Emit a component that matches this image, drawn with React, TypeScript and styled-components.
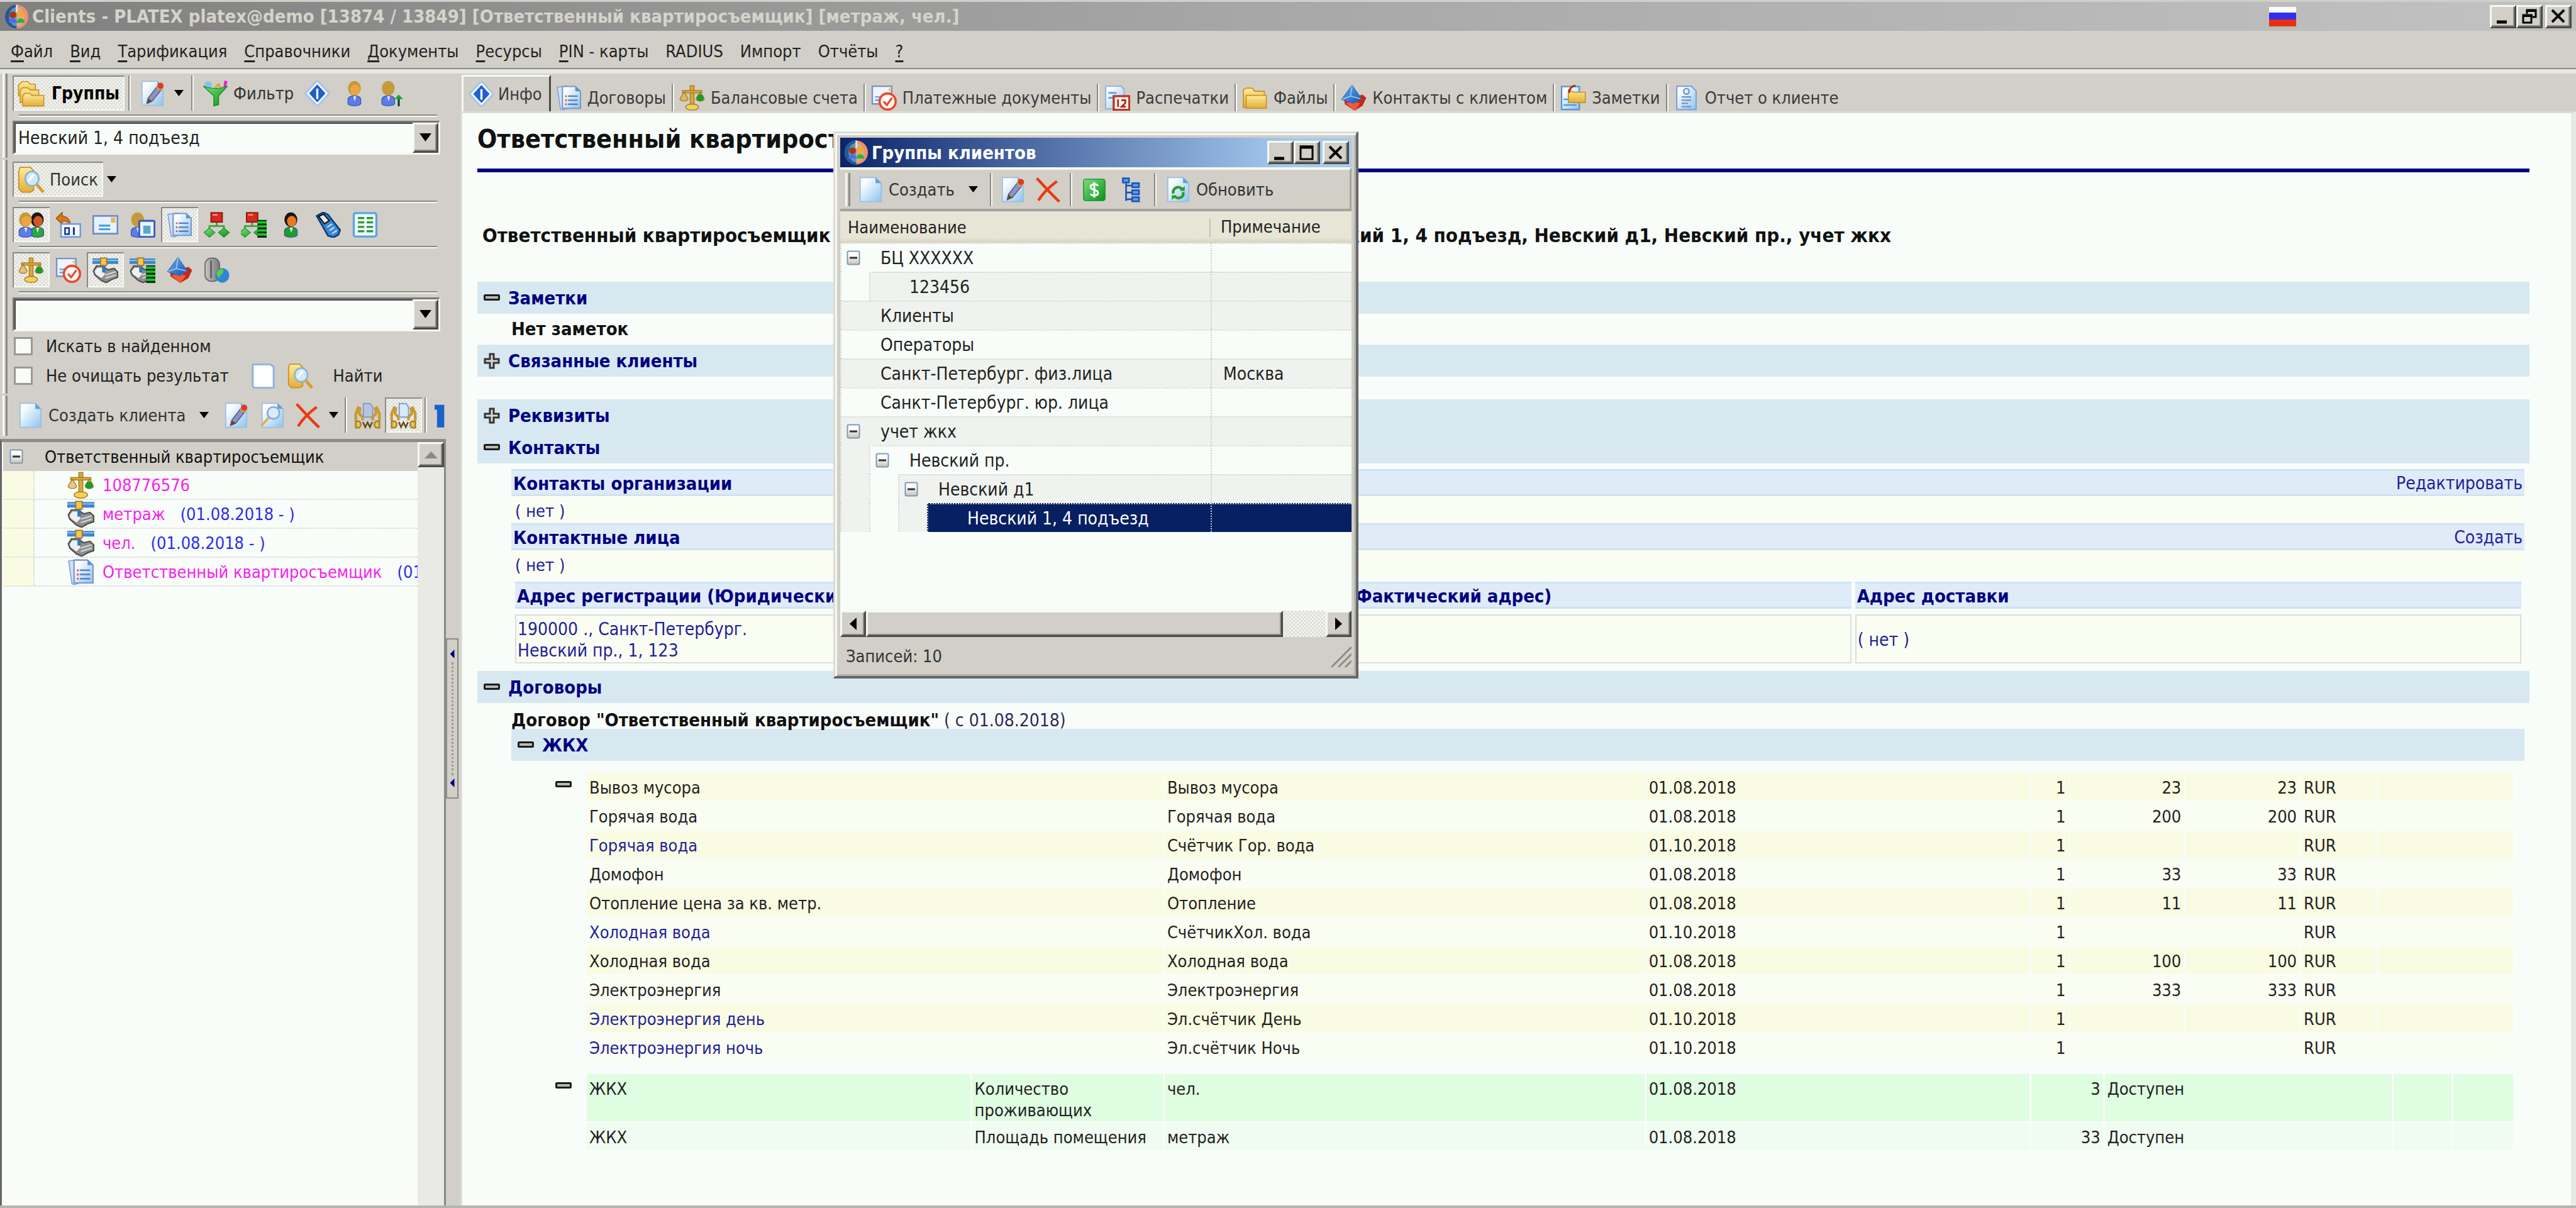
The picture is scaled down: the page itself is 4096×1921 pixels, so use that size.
import React from 'react';
import styled, { createGlobalStyle, css } from 'styled-components';

const FONT = '"DejaVu Sans Condensed", "DejaVu Sans", sans-serif';
const C = {
  face: '#d1cfc7', light: '#f6f8f2', mid: '#8a8a86', dark: '#4a4a48',
  page: '#f8fdf9', bar: '#d8e8f0', navy: '#000080', sub: '#e0ebf8', subLine: '#cfe2f6', cream: '#fafdf2',
};

const Global = createGlobalStyle`
  * { box-sizing: border-box; }
  body { margin: 0; background: ${C.face}; font-family: ${FONT}; font-size: 27px; color: #222; }
  button, select { font: inherit; color: inherit; margin: 0; padding: 0; border: 0; background: none; border-radius: 0; }
  h1, h2, h3, p, ul { margin: 0; padding: 0; font-weight: normal; }
  ul { list-style: none; }
  a { color: inherit; text-decoration: none; }
  svg { display: block; flex: none; }
`;

/* ---------- icons ---------- */

const DefsSvg = styled.svg`position: absolute;`;
const Defs = () => (
  <DefsSvg width="0" height="0" aria-hidden="true">
    <defs>
      <linearGradient id="paper" x1="0" y1="0" x2="1" y2="1"><stop offset="0.2" stopColor="#fbfdff" /><stop offset="1" stopColor="#8cc4ee" /></linearGradient>
      <linearGradient id="gold" x1="0" y1="0" x2="0" y2="1"><stop offset="0" stopColor="#ffeb9a" /><stop offset="1" stopColor="#e2ae38" /></linearGradient>
      <linearGradient id="green" x1="0" y1="0" x2="1" y2="1"><stop offset="0" stopColor="#7be07b" /><stop offset="1" stopColor="#0a8f1c" /></linearGradient>
      <linearGradient id="blue" x1="0" y1="0" x2="1" y2="1"><stop offset="0" stopColor="#6fb4ee" /><stop offset="1" stopColor="#1450b4" /></linearGradient>
      <linearGradient id="steel" x1="0" y1="0" x2="1" y2="0"><stop offset="0" stopColor="#c8c8c8" /><stop offset="1" stopColor="#777" /></linearGradient>
      <linearGradient id="box" x1="0" y1="0" x2="0" y2="1"><stop offset="0.3" stopColor="#fff" /><stop offset="1" stopColor="#c9c3b4" /></linearGradient>
    </defs>
  </DefsSvg>
);

const Sheet = () => (
  <>
    <path d="M1.500 .5h9.500l3.500 3.500v11.500h-13z" fill="url(#paper)" stroke="#9dbde6" strokeWidth=".7" />
    <path d="M11 .5l3.500 3.500h-3.500z" fill="#5f9fdc" />
  </>
);
const Pencil = () => (
  <>
    <path d="M4.500 14.300l.8-3.300 5.700-7.500 2.600 2-5.900 7.400z" fill="#8f93c4" stroke="#5a5a80" strokeWidth=".6" />
    <path d="M4.500 14.300l.8-3.300 2.400 1.900z" fill="#6a4a1a" />
    <path d="M10.300 4.300l2.600 2 .9-1.200-2.500-2.100z" fill="#e6a72e" />
    <circle cx="13" cy="3.300" r="1.900" fill="#e03a1c" />
  </>
);
const Glass = () => (
  <>
    <path d="M11 10.500l4.300 5" stroke="#e09a2a" strokeWidth="1.800" />
    <ellipse cx="8.500" cy="7.500" rx="4" ry="4.300" fill="#cfeafc" stroke="#8fb2cc" strokeWidth="1" />
    <path d="M6.500 9l3-4" stroke="#fff" strokeWidth="1.200" />
  </>
);
const Head = ({ x = 0, hair = '#c49a3c', face = '#f0a440', body = '#5a7cf0' }: { x?: number; hair?: string; face?: string; body?: string }) => (
  <g transform={`translate(${x} 0)`}>
    <path d="M4 14.500v-2.500c0-3.500 8-3.500 8 0v2.500c-1.500 1.600-6.500 1.600-8 0z" fill={body} stroke="#2d4a9c" strokeWidth=".4" />
    <path d="M7.300 9.800l.9 3.200 1-3.200z" fill="#e8ecff" />
    <ellipse cx="8" cy="4.800" rx="4" ry="4.500" fill={hair} />
    <ellipse cx="8.500" cy="5.800" rx="2.900" ry="3.400" fill={face} />
  </g>
);
const Scales = () => (
  <g fill="#d9a83c" stroke="#a87818" strokeWidth=".5">
    <rect x="6.800" y=".5" width="2.400" height="12" />
    <path d="M2 3.500h12v1.500h-12z" />
    <path d="M.5 8.500l2.500-4 2.500 4c0 2-5 2-5 0zM10.500 8.500l2.500-4 2.500 4c0 2-5 2-5 0z" fillOpacity=".6" />
    <ellipse cx="8" cy="13.800" rx="4" ry="1.900" fill="#f2d060" />
    <circle cx="13" cy="8" r="2.200" fill="#1c9a2c" stroke="none" />
  </g>
);
const Docs = () => (
  <>
    <path d="M.8 1.500l6-.8 6 12-8.500 2.800-1.500-.5z" fill="#cfe2f8" stroke="#7f9fd8" strokeWidth=".6" />
    <path d="M4 1h8l3.200 3v10.500h-11.200z" fill="url(#paper)" stroke="#7a94d0" strokeWidth=".8" />
    <path d="M12 1l3.200 3h-3.200z" fill="#5a8fdc" />
    <path d="M7.500 7h6M7.500 9.500h6M7.500 12h6" stroke="#5a7cc8" strokeWidth=".9" />
    <path d="M5.700 7h1M5.700 9.500h1M5.700 12h1" stroke="#e0502a" strokeWidth="1" />
  </>
);
const Meter = () => (
  <>
    <path d="M0 .8h16v3.400h-16z" fill="#3f86cc" /><path d="M0 2h16" stroke="#9cc8ee" strokeWidth=".6" />
    <path d="M.6 8.500l1.900-3h4l3 2.300 4-.8 2.200 2.200v3.300l-3.700 1.300-3.500 2-3-1.300-4-3.500z" fill="#8e8e8e" stroke="#4c4c4c" strokeWidth=".8" />
    <path d="M1.300 8.800l1.700-2.300h3l1.800 4-2.300 2.500-3.500-2.500z" fill="#f0f0f0" />
    <path d="M8 11l6.500-2M8 13l6.500-2" stroke="#d8d8d8" strokeWidth=".8" />
    <path d="M6 5h2v4.500h-2z" fill="#2f76c8" />
    <rect x="5" y=".5" width="3.800" height="4.600" fill="#f4c850" stroke="#a87820" strokeWidth=".7" />
  </>
);
const Bars = () => (
  <g><rect x="10.300" y="5" width="5.700" height="11" fill="#0a2a0a" /><path d="M10.300 6.500h5.700M10.300 9h5.700M10.300 11.500h5.700M10.300 14h5.700" stroke="#19c832" strokeWidth="1.400" /></g>
);
const Paid = () => (
  <>
    <path d="M.8.8h12v11h-12z" fill="#eef5ff" stroke="#7d8fc4" strokeWidth=".9" />
    <path d="M2.500 7.500h3M2.500 9.500h3" stroke="#6aa8e8" strokeWidth="1" /><path d="M10.500 3l1.500-1.500v3z" fill="#e8c850" />
    <circle cx="10.300" cy="10.300" r="5" fill="#fff6f2" stroke="#e8492a" strokeWidth="1.400" />
    <path d="M7.800 10.300l2 2.200 3.200-4.500" fill="none" stroke="#e8492a" strokeWidth="1.200" />
  </>
);
const Gems = () => (
  <>
    <path d="M2 9l11.500-3 2.300 2-2.300 5-5 3-6-4z" fill="#c42a14" /><path d="M3 11.500l4-1.500 5 1.500-3.500 4.500z" fill="#ee5a3a" />
    <path d="M7 .2l5.800 8.300-5 3-7.300-2.500z" fill="url(#blue)" stroke="#2a68b8" strokeWidth=".4" />
    <path d="M7 .5l-1 6.500-5 1.800M6 7l6 1.500" stroke="#9cd0f4" strokeWidth=".6" fill="none" />
  </>
);
const Hands = ({ bg }: { bg: string }) => (
  <>
    <path d="M5.500 1h4l1.500 2v6h-5.500z" fill={bg} stroke="#7a9cd8" strokeWidth=".7" />
    <path d="M1 11v-4l1.500-3.500 1 .5-.5 3 2 2v2M15 11v-4l-1.500-3.500-1 .5.5 3-2 2v2" fill="none" stroke="#c89a34" strokeWidth="1.600" />
    <path d="M1 11.500h1.500c2 0 2 3.800 0 3.800h-1.500zM15 11.500h-1.500c-2 0-2 3.800 0 3.800h1.500z" fill="#e4c468" stroke="#b08420" strokeWidth="1" />
    <path d="M5.300 12l1.300 3 1.400-2.800 1.400 2.800 1.300-3" fill="none" stroke="#604818" strokeWidth=".9" />
  </>
);
const Tree = () => (
  <g>
    <path d="M8 6v3M3.500 11v-2.200h9v2.200" fill="none" stroke="#3a9c3a" strokeWidth="1" />
    <rect x="4.500" y=".5" width="7" height="5.800" fill="#d82a1c" stroke="#8c1408" strokeWidth=".7" /><path d="M5.500 1.800h3" stroke="#f89a8a" />
    <path d="M3.500 10l3.400 2.800-3.400 2.900-3.400-2.900zM12.500 10l3.400 2.800-3.400 2.900-3.400-2.900z" fill="url(#green)" stroke="#158a1c" strokeWidth=".4" />
  </g>
);

const ICONS: Record<string, React.ReactNode> = {
  app: (
    <>
      <ellipse cx="8" cy="8" rx="7.600" ry="7.800" fill="#f0906a" /><path d="M8 .2a7.600 7.800 0 0 0 0 15.600z" fill="#1f5a94" />
      <ellipse cx="8" cy="8" rx="5" ry="6.300" fill="#b8c8d8" opacity=".5" /><path d="M8 .2v5" stroke="#e8eef4" strokeWidth="1" />
      <circle cx="5.500" cy="6.800" r="2.200" fill="#a83414" /><circle cx="10.300" cy="6.300" r="2.300" fill="#f4a834" />
      <path d="M2.800 12c0-3.800 5.200-3.800 5.200 0z" fill="#4a6cf4" /><path d="M8 12c0-3.800 5.200-3.800 5.200 0z" fill="#2ab43a" />
    </>
  ),
  folders: (
    <g fill="url(#gold)" stroke="#c8922a" strokeWidth=".6">
      <path d="M.5 3l2-2h3.500l1.500 1.500h3v7h-10z" /><path d="M1.500 6.500l1.500-1.800h3l1.500 1.300h5v7.500h-11z" />
      <path d="M3 9.500l1.300-1.500h3l1 1.200h7.200v6.300h-12.500z" />
    </g>
  ),
  folder: (
    <g fill="url(#gold)" stroke="#c8922a" strokeWidth=".7">
      <path d="M.8 14v-11l1.500-1h4l1.500 2h6v10z" /><path d="M2.500 6.500h12.500v8h-12.500z" />
    </g>
  ),
  edit: <><Sheet /><Pencil /></>,
  sheet: <Sheet />,
  view: <><Sheet /><path d="M6 9l-5 5.500" stroke="#e0b050" strokeWidth="1.500" /><circle cx="8.500" cy="6.500" r="3.700" fill="#d8ecfc" stroke="#8fa8d8" strokeWidth="1" /></>,
  cross: <path d="M1 1c3.500 3.500 9 10 14 14.500M13.500 2.800c-5 3.700-9.500 8.500-11.500 12" fill="none" stroke="#ea3a12" strokeWidth="1.700" />,
  funnel: (
    <>
      <circle cx="3.500" cy="3" r="2.400" fill="#7fc4f0" /><path d="M7 4l3-2.500 2 2.500z" fill="#f0a030" /><path d="M13 4l.6-4 1.900.6-.9 3.400z" fill="#e81cd8" />
      <path d="M.5 3.500c4 1.800 11 1.800 15 0l-5.500 6v5.500l-3 .8v-6.300z" fill="url(#green)" stroke="#128a1c" strokeWidth=".5" />
    </>
  ),
  info: (
    <>
      <path d="M8 0l7.500 8-7.500 8-7.500-8z" fill="#f2f7ff" stroke="#a8c4ec" strokeWidth="1.200" /><path d="M8 3l4.500 5-4.500 5-4.500-5z" fill="#2060c8" stroke="#2060c8" strokeWidth=".8" strokeLinejoin="round" />
      <path d="M8 5v6.500" stroke="#fff" strokeWidth="1.300" />
    </>
  ),
  person: <Head />,
  personUp: <><Head x={-2} face="#c49a3c" /><path d="M12.500 16v-6" stroke="#123a12" strokeWidth="1.200" /><path d="M11 11h3l-1.500-1.500z" fill="#12a832" stroke="#12a832" /></>,
  search: (
    <><path d="M1.500.8h6l2 2v11.500l-2 1.200h-5l-1.800-2v-10.500z" fill="url(#gold)" stroke="#c8922a" strokeWidth=".7" /><Glass /></>
  ),
  people: <><Head x={3.800} hair="#1c1410" face="#d05a24" body="#2aa83a" /><Head x={-3.500} /></>,
  redate: (
    <><path d="M.5 4l3.800-3.800v2.300c3.500.5 5 3 5.200 5.500-1.500-2-3-2.500-5.200-2.200v2z" fill="#d8781c" stroke="#984c0c" strokeWidth=".5" />
      <rect x="3.500" y="7.500" width="12" height="8" fill="#f4f9ff" stroke="#6f9cdc" /><rect x="6" y="10" width="2.500" height="3.800" fill="none" stroke="#1a3a9c" strokeWidth="1" /><path d="M11.500 9.500v4.800" stroke="#1a3a9c" strokeWidth="1.200" /></>
  ),
  card: (
    <><rect x=".5" y="2.500" width="15" height="11" fill="#e6f2fe" stroke="#6a88c8" /><rect x="11.500" y="3.500" width="2.800" height="3.200" fill="#e8b84a" /><path d="M4 8.500h7M4 10.800h7" stroke="#3a9ce0" strokeWidth="1.100" /></>
  ),
  idcard: <><Head x={-3} face="#c49a3c" /><rect x="6" y="5.500" width="9.500" height="10" rx="1" fill="#eef5ff" stroke="#3a5cc0" strokeWidth="1.200" /><path d="M8.500 13.500v-5h4.500v5z" fill="#5aa8c8" /></>,
  docs: <Docs />,
  tree: <Tree />,
  treeBars: <><g transform="translate(-1 0)"><Tree /></g><Bars /></>,
  agent: <Head hair="#1c1410" face="#e87a24" body="#1f9c2f" />,
  phone: (
    <><path d="M1 2.500l4-2.300 3 1.500 7.500 9.500-1 3-3 1.600-3.500-1z" fill="#3a86d0" stroke="#123a78" strokeWidth="1" /><path d="M2.300 2.800l3-1.400 3.500 4-3 2z" fill="#e4e8ec" stroke="#111" strokeWidth=".8" /><path d="M7.500 9.500l3-2M9 11.500l3-2M10.500 13.500l3-2" stroke="#bfe0fa" strokeWidth=".9" /></>
  ),
  list: (
    <><rect x="1" y=".7" width="14" height="14.600" rx="1.200" fill="#f4fbff" stroke="#5aa4e0" strokeWidth="1.300" /><path d="M3.500 3.800h4M9 3.800h4M3.500 6.500h4M9 6.500h4M3.500 9.300h4M9 9.300h4M3.500 12h4M9 12h4" stroke="#2a9c3a" strokeWidth="1.300" /></>
  ),
  scales: <Scales />,
  paid: <Paid />,
  meter: <Meter />,
  meterBars: <><Meter /><Bars /></>,
  gems: <Gems />,
  server: (
    <><rect x=".8" y=".5" width="9" height="14.500" rx="4" fill="url(#steel)" stroke="#6a6a6a" strokeWidth=".7" /><path d="M4.500 2v11" stroke="#5c5c5c" strokeWidth="1" /><ellipse cx="11.500" cy="11.300" rx="4.300" ry="4.500" fill="#2f86d8" /><path d="M8.500 8.500c2-2 4.500-1 3.500 1s-2 1-2 3.500c-2-1-2.500-3-1.500-4.500z" fill="#5ccc3a" /></>
  ),
  blank: <path d="M1.500 1h11l2 1.500v13h-12l-1-1z" fill="#fff" stroke="#8fb4e4" strokeWidth="1.200" />,
  handOff: <Hands bg="#b8c4dc" />,
  hand: <Hands bg="#d8eafc" />,
  cut: <path d="M0 1.500h6v14h-4.500v-11h-1.500z" fill="#1a62cc" />,
  print: (
    <><path d="M.8.8h9.500l2 2v12h-11.500z" fill="url(#paper)" stroke="#8fb4e0" strokeWidth=".8" /><path d="M2.500 5h5M2.500 8h3" stroke="#5aa8e8" strokeWidth="1.200" /><rect x="5.800" y="7" width="9.700" height="8.500" fill="#fff2ee" stroke="#c03020" strokeWidth="1.300" /><path d="M8.500 9v4.800M10.500 9.500h2.500v1.800l-2.300 2.200h2.600" fill="none" stroke="#a82014" strokeWidth="1" /></>
  ),
  notes: (
    <><path d="M.8 1h11v14.300h-11z" fill="url(#paper)" stroke="#5a90d8" strokeWidth=".9" /><path d="M2 12.500h8M2 9h3" stroke="#4a9ce8" strokeWidth="1" /><path d="M5 3l3 1.500h7.500v6.500h-10.500z" fill="url(#gold)" stroke="#c09020" strokeWidth=".6" /><path d="M5.500 5c0-2.500 1.500-4.500 4-4.500" fill="none" stroke="#b82a14" strokeWidth="1.200" /></>
  ),
  report: (
    <><path d="M2 .8h9l3 3v11.500h-12z" fill="url(#paper)" stroke="#7fa4e0" strokeWidth=".9" /><circle cx="8" cy="4" r="1.700" fill="none" stroke="#6f92cc" strokeWidth=".9" /><path d="M5 7.500h6M5 9.500h6M5 11.500h4M5 13.500h6" stroke="#6f92cc" strokeWidth=".9" /></>
  ),
  money: (
    <><rect x=".8" y=".8" width="14.400" height="14.400" rx="1.500" fill="url(#green)" stroke="#12902a" strokeWidth=".6" /><path d="M10.500 5.200c-1.200-1.500-5-1.300-5 .9 0 2.300 5 1.500 5 3.800 0 2.200-3.800 2.300-5 .8M8 2.800v10.400" fill="none" stroke="#f2fff0" strokeWidth="1.300" /></>
  ),
  levels: (
    <g stroke="#1a54b8" fill="#5a9cec"><path d="M4.500 3.500v11.500M4.500 5.500h3.500M4.500 9.800h3.500M4.500 14h3.500" fill="none" strokeWidth="1" /><rect x="2.500" y="1" width="3.800" height="2.600" /><rect x="8.300" y="4" width="4.200" height="2.600" /><rect x="8.300" y="8.400" width="4.200" height="2.600" /><rect x="8.300" y="12.700" width="4.200" height="2.600" /></g>
  ),
  refresh: (
    <><Sheet /><path d="M5 10.500c-1-3.500 3.500-5.500 5.500-2.500M11 9.500c1 3.500-3.500 5-5.500 2.500" fill="none" stroke="#2a9c2a" strokeWidth="1.700" /><path d="M9 8.800h3v-3zM7 11.500h-3v3z" fill="#2a9c2a" /></>
  ),
};

const Icon = ({ name, size = 41 }: { name: string; size?: number }) => (
  <svg width={size} height={size} viewBox="0 0 16 16" aria-hidden="true">{ICONS[name]}</svg>
);
const Caret = () => <svg width="15" height="11" viewBox="0 0 15 11" aria-hidden="true"><path d="M0 0h15l-7.500 10z" fill="#000" /></svg>;

const MinusBox = () => (
  <svg width="22" height="24" viewBox="0 0 22 24" aria-hidden="true">
    <rect x="1.500" y="1.500" width="19" height="21" rx="2" fill="url(#box)" stroke="#7d9ab8" strokeWidth="2" /><path d="M5 12h12" stroke="#333" strokeWidth="3" />
  </svg>
);
const Fold = ({ open }: { open?: boolean }) => open ? (
  <svg width="26" height="26" viewBox="0 0 26 26" aria-hidden="true"><rect x="1.500" y="8.500" width="23" height="7" rx="1" fill="#b9bab4" stroke="#1c1c1c" strokeWidth="3" /></svg>
) : (
  <svg width="26" height="26" viewBox="0 0 26 26" aria-hidden="true"><path d="M10 2h6v8h8v6h-8v8h-6v-8h-8v-6h8z" fill="#d9dbd6" stroke="#333" strokeWidth="3" /></svg>
);

/* ---------- shared controls ---------- */

const raised = css`
  background: ${C.face};
  border: 3px solid;
  border-color: ${C.light} ${C.dark} ${C.dark} ${C.light};
  box-shadow: inset -2px -2px 0 ${C.mid};
`;
const sunken = css`
  background: repeating-conic-gradient(#dddcd6 0 25%, #f2f4ef 0 50%) 0 0 / 6px 6px;
  box-shadow: inset 2px 2px 0 ${C.mid}, inset -2px -2px 0 ${C.light};
`;
const ToolButton = styled.button<{ $on?: boolean; $bold?: boolean }>`
  display: flex;
  flex: none;
  align-items: center;
  align-self: stretch;
  gap: 8px;
  padding: 0 8px;
  white-space: nowrap;
  color: #333;
  ${p => p.$bold && css`font-weight: bold; font-size: 28px; gap: 11px; color: #000;`}
  ${p => p.$on && sunken}
`;
const IconButton = styled(ToolButton)<{ $slim?: boolean }>`width: ${p => p.$slim ? 56 : 59}px; padding: 0; justify-content: center;`;
const DropButton = styled.button<{ $wide?: boolean }>`
  display: flex;
  flex: none;
  align-items: center;
  align-self: stretch;
  padding: 0 ${p => p.$wide ? 14 : 6}px;
`;
const Sep = styled.span<{ $m?: number }>`
  width: 4px;
  flex: none;
  align-self: stretch;
  margin: 0 ${p => p.$m ?? 5}px;
  border-left: 2px solid ${C.mid};
  border-right: 2px solid ${C.light};
`;
const CapButton = styled.button`
  ${raised}
  width: 42px;
  height: 37px;
  display: grid;
  place-items: center;
`;
const CapGap = styled.span`width: 4px;`;

/* ---------- window frame ---------- */

const Shell = styled.div`
  height: 100vh;
  display: flex;
  flex-direction: column;
  position: relative;
  overflow: hidden;
  border-top: 3px solid #cfcfcb;
  border-bottom: 4px solid #b4b4b0;
`;
const TitleBar = styled.header`
  height: 46px;
  flex: none;
  display: flex;
  align-items: center;
  padding: 0 7px;
  background: linear-gradient(90deg, #808080, #a8a8a8 50%, #c2c2c2);
`;
const Caption = styled.h1<{ $color: string }>`
  font: bold 29px ${FONT};
  color: ${p => p.$color};
  margin-left: 5px;
  flex: 1;
  white-space: nowrap;
`;
const Flag = styled.svg`margin-right: 308px;`;
const Menu = styled.nav`
  height: 68px;
  flex: none;
  display: flex;
  align-items: center;
  gap: 27px;
  padding: 4px 17px 0;
  border-bottom: 7px solid #e6e8e2;
  box-shadow: inset 0 -2px 0 ${C.mid};
`;
const MenuItem = styled.button`
  white-space: nowrap;
  u { text-decoration-thickness: 3px; text-underline-offset: 5px; }
`;
const Work = styled.div`flex: 1; min-height: 0; display: flex;`;

/* ---------- left pane ---------- */

const Aside = styled.aside`
  width: 709px;
  flex: none;
  display: flex;
  flex-direction: column;
  gap: 3px;
  padding-left: 4px;
`;
const Band = styled.section`
  display: flex;
  gap: 8px;
  overflow: hidden;
`;
const Grip = styled.span`
  width: 8px;
  flex: none;
  border: solid;
  border-width: 0 3px;
  border-color: ${C.light} ${C.mid} ${C.mid} ${C.light};
`;
const BandBody = styled.div`flex: 1; min-width: 0; padding: 3px 9px 5px 0;`;
const Tools = styled.div`display: flex; align-items: center; height: 56px;`;
const Rule = styled.hr`
  height: 4px;
  border: 0;
  margin: 6px 5px 6px 10px;
  border-top: 2px solid ${C.mid};
  border-bottom: 2px solid ${C.light};
`;
const ComboBox = styled.div`
  height: 54px;
  display: flex;
  background: ${C.page};
  border: 3px solid;
  border-color: #777 ${C.light} ${C.light} #777;
  box-shadow: inset 2px 2px 0 ${C.dark};
  select { flex: 1; min-width: 0; appearance: none; padding-left: 6px; font-size: 28px; }
`;
const ComboArrow = styled.span`
  ${raised}
  width: 41px;
  display: grid;
  place-items: center;
`;
const CheckRow = styled.div`display: flex; align-items: center; height: 47px;`;
const CheckLabel = styled.label`
  display: flex;
  align-items: center;
  gap: 21px;
  padding-left: 2px;
  white-space: nowrap;
  input { appearance: none; width: 30px; height: 29px; margin: 0; background: ${C.page}; border: 3px solid #999994; }
`;
const FindTools = styled.div`display: flex; align-items: center; height: 47px; margin-left: 34px; gap: 18px;`;
const PlainButton = styled.button`margin-left: 14px;`;

const TreePane = styled.div`
  flex: 1;
  min-height: 0;
  display: flex;
  margin: 2px 0 0 -4px;
  background: ${C.page};
  border: 3px solid;
  border-width: 5px 3px 0;
  border-color: ${C.mid} ${C.mid} ${C.mid} #666;
`;
const TreeList = styled.ul`flex: 1; min-width: 0; overflow: hidden; padding-left: 2px;`;
const TreeHead = styled.li`
  display: flex;
  align-items: center;
  height: 46px;
  padding-left: 10px;
  gap: 34px;
  background: ${C.face};
  white-space: nowrap;
  color: #111;
`;
const TreeRow = styled.li`
  display: flex;
  align-items: center;
  height: 46px;
  gap: 13px;
  white-space: nowrap;
  overflow: hidden;
  border-bottom: 2px dotted #d4d6d0;
  &::before {
    content: '';
    width: 48px;
    height: 44px;
    flex: none;
    margin-right: 39px;
    background: #f9fce2;
    border-right: 2px dotted #d4d6d0;
  }
`;
const Pink = styled.span`flex: none; color: #f820f0;`;
const Period = styled.span`min-width: 0; overflow: hidden; color: #2c2cf0; margin-left: 11px;`;
const VTrack = styled.div`width: 42px; background: #e9eae6;`;
const VUp = styled.button`${raised} width: 42px; height: 40px; display: grid; place-items: center;`;

const Splitter = styled.div`
  width: 23px;
  flex: none;
  display: flex;
  flex-direction: column;
  &::before { content: ''; flex: 898; }
  &::after { content: ''; flex: 647; }
`;
const SplitHandle = styled.button`
  height: 255px;
  width: 20px;
  display: flex;
  flex-direction: column;
  align-items: center;
  justify-content: space-between;
  padding: 16px 0;
  border: 2px solid ${C.mid};
  &::after, &::before { content: ''; width: 7px; height: 14px; background: ${C.navy}; clip-path: polygon(100% 0, 100% 100%, 0 50%); }
  span { height: 180px; border-left: 3px dotted #999; }
`;

/* ---------- main pane ---------- */

const Main = styled.main`flex: 1; min-width: 0; display: flex; flex-direction: column;`;
const TabBar = styled.div`display: flex; height: 60px; flex: none; padding: 2px 2px 0; align-items: center;`;
const Tab = styled.button<{ $active?: boolean }>`
  display: flex;
  align-items: center;
  gap: 9px;
  height: 44px;
  padding: 0 9px 0 8px;
  margin-top: 14px;
  color: #3a3a3a;
  white-space: nowrap;
  border-right: 2px solid ${C.mid};
  box-shadow: 2px 0 0 ${C.light};
  margin-right: 2px;
  &:last-child { border: 0; box-shadow: none; }
  ${p => p.$active && css`
    height: 61px;
    margin-top: 3px;
    margin-right: 0;
    padding: 0 11px 0 8px;
    border: 3px solid;
    border-color: ${C.light} ${C.dark} transparent ${C.light};
    box-shadow: none;
    gap: 6px;
  `}
`;
const Page = styled.article`
  flex: 1;
  min-height: 0;
  background: ${C.page};
  border: 3px solid #dcdcd6;
  border-right: 8px solid #e8eae6;
  border-bottom: 0;
  padding: 16px 66px 0 24px;
`;
const Title = styled.h1`font: bold 41px/50px ${FONT}; color: #111; padding-bottom: 22px; border-bottom: 6px solid ${C.navy};`;
const Subtitle = styled.h2`font: bold 31px/40px ${FONT}; color: #111; margin: 80px 0 54px; padding-left: 8px; white-space: nowrap;`;
const Groups = styled.span`padding-left: 746px;`;
const Bar = styled.h3<{ $before?: number }>`
  display: flex;
  align-items: center;
  gap: 13px;
  height: 51px;
  padding-left: 10px;
  margin-top: ${p => p.$before ?? 0}px;
  background: ${C.bar};
  color: ${C.navy};
  font: bold 29px/40px ${FONT};
`;
const Inset = styled.div<{ $top?: number }>`margin: ${p => p.$top ?? 0}px 8px 0 54px;`;
const Note = styled.p`font: bold 29px/49px ${FONT}; color: #111;`;
const SubBar = styled.div`
  display: flex;
  justify-content: space-between;
  align-items: center;
  height: 43px;
  padding: 2px 3px 0;
  background: ${C.sub};
  border: solid ${C.subLine};
  border-width: 3px 0;
  color: ${C.navy};
  a { color: #22229a; font-size: 28px; }
`;
const Strong = styled.strong`font-size: 29px; color: ${C.navy}; white-space: nowrap;`;
const None = styled.p`height: 43px; line-height: 47px; padding-left: 6px; background: ${C.cream}; color: #22229a;`;
const Addresses = styled.div`
  display: grid;
  grid-template-columns: repeat(3, 1fr);
  gap: 9px 6px;
  margin: 7px 5px 12px 6px;
`;
const Address = styled.div`
  display: flex;
  flex-direction: column;
  justify-content: center;
  height: 78px;
  padding: 4px 2px 0;
  font-size: 28px;
  line-height: 34px;
  color: #22229a;
  background: ${C.cream};
  border: 2px solid #dddeda;
`;
const Contract = styled.p`
  padding-top: 13px;
  line-height: 28px;
  height: 41px;
  font-size: 28px;
  color: #2a2a5a;
  strong { font-size: 29px; color: #111; }
`;

const Block = styled.div<{ $top?: number }>`
  display: flex;
  align-items: flex-start;
  gap: 24px;
  margin: ${p => p.$top ?? 0}px 18px 0 70px;
  svg { margin-top: 6px; }
`;
const Data = styled.table<{ $tone: 'yellow' | 'green' }>`
  flex: 1;
  width: 100%;
  table-layout: fixed;
  border-collapse: separate;
  border-spacing: 0;
  td {
    height: 46px;
    padding: 7px 4px 0;
    line-height: 34px;
    vertical-align: top;
    border-right: 3px solid ${C.page};
    border-bottom: 2px solid ${C.page};
    background: ${p => p.$tone === 'yellow' ? C.cream : '#f0fcf1'};
  }
  td:last-child { border-right: 0; }
  tr:nth-child(odd) td { background: ${p => p.$tone === 'yellow' ? '#f9fce2' : '#dffde0'}; }
`;
const Num = styled.td`text-align: right;`;

/* ---------- dialog ---------- */

const Dialog = styled.section`
  position: absolute;
  left: 1325px;
  top: 206px;
  width: 835px;
  height: 870px;
  display: flex;
  flex-direction: column;
  padding: 7px 7px 7px 8px;
  background: ${C.face};
  border: solid;
  border-width: 3px 4px 4px 3px;
  border-color: #dcdcd4 #666 #666 #dcdcd4;
  box-shadow: inset 3px 3px 0 ${C.light}, inset -3px -3px 0 #b4b4ae;
`;
const DialogTitle = styled.header`
  display: flex;
  align-items: center;
  height: 47px;
  flex: none;
  padding: 0 4px 0 6px;
  background: linear-gradient(90deg, #0a246a, #a6caf0 88%);
`;
const DialogTools = styled.div`
  display: flex;
  height: 70px;
  flex: none;
  padding: 5px 4px 4px;
  border-top: 4px solid ${C.light};
  border-bottom: 4px solid #a2a29e;
  border-right: 3px solid #a2a29e;
`;
const DialogBody = styled.div`flex: 1; min-height: 0; background: ${C.page};`;
const GroupTable = styled.table`
  width: 100%;
  table-layout: fixed;
  border-collapse: separate;
  border-spacing: 0;
  font-size: 28px;
  color: #222;
  th {
    height: 50px;
    padding: 0 12px;
    text-align: left;
    font-weight: normal;
    font-size: 27px;
    background: linear-gradient(#e6e5d6 84%, #d8d2c0);
  }
  th + th { padding-left: 14px; }
  th + th::before { content: ''; display: inline-block; width: 2px; height: 30px; margin: 0 16px 0 -16px; background: #c4c2b4; vertical-align: middle; }
  td { padding: 0; height: 46px; }
`;
const GroupRow = styled.tr<{ $bg: string; $sel?: boolean }>`
  td:last-child {
    padding-left: 18px;
    background: ${p => p.$bg};
    border-left: 2px dotted #ccceca;
    border-top: 2px dotted #d4d6d2;
  }
  color: ${p => p.$sel ? '#fff' : 'inherit'};
`;
const NodeCell = styled.div`display: flex; height: 46px;`;
const Gutter = styled.span<{ $bg: string }>`width: 46px; flex: none; background: ${p => p.$bg}; border-left: 2px dotted #d4d6d2;`;
const Node = styled.span<{ $bg: string; $leaf?: boolean }>`
  flex: 1;
  display: flex;
  align-items: center;
  gap: 32px;
  padding-left: ${p => p.$leaf ? 62 : 8}px;
  background: ${p => p.$bg};
  border-left: 2px dotted #d4d6d2;
  border-top: 2px dotted #d4d6d2;
  white-space: nowrap;
`;
const HScroll = styled.div`
  display: flex;
  height: 42px;
  flex: none;
  background: repeating-conic-gradient(#dddcd6 0 25%, #f2f4ef 0 50%) 0 0 / 6px 6px;
`;
const HButton = styled.button`${raised} width: 41px; display: grid; place-items: center;`;
const HThumb = styled.div`${raised} flex: 662;`;
const HRest = styled.div`flex: 69;`;
const Status = styled.footer`
  display: flex;
  justify-content: space-between;
  align-items: center;
  height: 55px;
  flex: none;
  padding: 6px 0 0 9px;
  color: #333;
`;

/* ---------- data ---------- */

const MENU: [string, string][] = [['Ф', 'айл'], ['В', 'ид'], ['Т', 'арификация'], ['С', 'правочники'], ['Д', 'окументы'], ['Р', 'есурсы'], ['P', 'IN - карты'], ['', 'RADIUS'], ['', 'Импорт'], ['', 'Отчёты'], ['?', '']];

const TABS: [string, string][] = [['docs', 'Договоры'], ['scales', 'Балансовые счета'], ['paid', 'Платежные документы'], ['print', 'Распечатки'], ['folder', 'Файлы'], ['gems', 'Контакты с клиентом'], ['notes', 'Заметки'], ['report', 'Отчет о клиенте']];

const OBJECTS = ['people', 'redate', 'card', 'idcard', 'docs', 'tree', 'treeBars', 'agent', 'phone', 'list'];
const LINKED = ['scales', 'paid', 'meter', 'meterBars', 'gems', 'server'];

const CLIENT_TREE: [string, string, string?][] = [
  ['scales', '108776576'], ['meter', 'метраж', '(01.08.2018 - )'], ['meter', 'чел.', '(01.08.2018 - )'],
  ['docs', 'Ответственный квартиросъемщик', '(01.08.2018 - )'],
];

const W = '#f8fdf9', G = '#eff2ee', S = '#062062';
const GROUPS: { name: string; path: string[]; bg: string; open?: boolean; note?: string }[] = [
  { name: 'БЦ XXXXXX', path: [], bg: W, open: true },
  { name: '123456', path: [W], bg: G },
  { name: 'Клиенты', path: [], bg: G },
  { name: 'Операторы', path: [], bg: W },
  { name: 'Санкт-Петербург. физ.лица', path: [], bg: G, note: 'Москва' },
  { name: 'Санкт-Петербург. юр. лица', path: [], bg: W },
  { name: 'учет жкх', path: [], bg: G, open: true },
  { name: 'Невский пр.', path: [G], bg: W, open: true },
  { name: 'Невский д1', path: [G, W], bg: G, open: true },
  { name: 'Невский 1, 4 подъезд', path: [G, W, G], bg: S },
];

const SERVICES: [string, string, string, string, boolean?][] = [
  ['Вывоз мусора', 'Вывоз мусора', '01.08.2018', '23'],
  ['Горячая вода', 'Горячая вода', '01.08.2018', '200'],
  ['Горячая вода', 'Счётчик Гор. вода', '01.10.2018', '', true],
  ['Домофон', 'Домофон', '01.08.2018', '33'],
  ['Отопление цена за кв. метр.', 'Отопление', '01.08.2018', '11'],
  ['Холодная вода', 'СчётчикХол. вода', '01.10.2018', '', true],
  ['Холодная вода', 'Холодная вода', '01.08.2018', '100'],
  ['Электроэнергия', 'Электроэнергия', '01.08.2018', '333'],
  ['Электроэнергия день', 'Эл.счётчик День', '01.10.2018', '', true],
  ['Электроэнергия ночь', 'Эл.счётчик Ночь', '01.10.2018', '', true],
];
const ServiceName = styled.td<{ $metered?: boolean }>`color: ${p => p.$metered ? '#22229a' : 'inherit'};`;
const SERVICE_COLS = ['30%', '25%', '20%', '2%', '6%', '6%', '4%', '7%'];
const METER_COLS = ['20%', '10%', '25%', '20%', '3.8%', '15%', '3.1%', '3.1%'];

const Cols = ({ of }: { of: string[] }) => <colgroup>{of.map((w, i) => <col key={i} width={w} />)}</colgroup>;

const CapIcon = ({ kind }: { kind: 'min' | 'max' | 'restore' | 'close' }) => (
  <svg width="26" height="26" viewBox="0 0 26 26" fill="none" stroke="#000" strokeWidth="4" aria-hidden="true">
    {kind === 'min' && <path d="M3 22h16" strokeWidth="5" />}
    {kind === 'max' && <><path d="M3 3h19v20h-19z" strokeWidth="3" /><path d="M2 4h21" strokeWidth="5" /></>}
    {kind === 'restore' && <><path d="M9 9v-6h14v11h-5" strokeWidth="3" /><path d="M8 4h16M2 12h16" strokeWidth="4" /><path d="M3 11h13v12h-13z" strokeWidth="3" /></>}
    {kind === 'close' && <path d="M3 3l19 19M22 3l-19 19" />}
  </svg>
);

const Combo = ({ label, value }: { label: string; value: string }) => (
  <ComboBox>
    <select aria-label={label} defaultValue={value}><option>{value}</option></select>
    <ComboArrow><svg width="19" height="14" viewBox="0 0 19 14" aria-hidden="true"><path d="M0 0h19l-9.500 13z" fill="#000" /></svg></ComboArrow>
  </ComboBox>
);

const LeftPane = () => (
  <Aside>
    <Band>
      <Grip />
      <BandBody>
        <Tools>
          <ToolButton $on $bold><Icon name="folders" size={43} />Группы</ToolButton>
          <Sep $m={6} />
          <ToolButton aria-label="Изменить"><Icon name="edit" /></ToolButton>
          <DropButton aria-label="Ещё"><Caret /></DropButton>
          <Sep $m={6} />
          <ToolButton><Icon name="funnel" />Фильтр</ToolButton>
          <IconButton aria-label="Инфо"><Icon name="info" /></IconButton>
          <IconButton aria-label="Клиент"><Icon name="person" /></IconButton>
          <IconButton aria-label="Поднять клиента"><Icon name="personUp" /></IconButton>
        </Tools>
        <Rule />
        <Combo label="Группа" value="Невский 1, 4 подъезд" />
      </BandBody>
    </Band>
    <Band>
      <Grip />
      <BandBody>
        <Tools>
          <ToolButton $on><Icon name="search" size={43} />Поиск</ToolButton>
          <DropButton aria-label="Варианты поиска"><Caret /></DropButton>
        </Tools>
        <Rule />
        <Tools>{OBJECTS.map(n => <IconButton key={n} aria-label={n} $on={n === 'people' || n === 'docs'}><Icon name={n} /></IconButton>)}</Tools>
        <Rule />
        <Tools>{LINKED.map(n => <IconButton key={n} aria-label={n} $on={n === 'scales' || n === 'meter'}><Icon name={n} /></IconButton>)}</Tools>
        <Rule />
        <Combo label="Строка поиска" value="" />
        <CheckRow><CheckLabel><input type="checkbox" />Искать в найденном</CheckLabel></CheckRow>
        <CheckRow>
          <CheckLabel><input type="checkbox" />Не очищать результат</CheckLabel>
          <FindTools>
            <button aria-label="Очистить"><Icon name="blank" /></button>
            <button aria-label="Искать"><Icon name="search" /></button>
            <PlainButton>Найти</PlainButton>
          </FindTools>
        </CheckRow>
      </BandBody>
    </Band>
    <Band>
      <Grip />
      <BandBody>
        <Tools>
          <ToolButton><Icon name="sheet" />Создать клиента</ToolButton>
          <DropButton $wide aria-label="Варианты создания"><Caret /></DropButton>
          <IconButton aria-label="Изменить"><Icon name="edit" /></IconButton>
          <IconButton $slim aria-label="Просмотр"><Icon name="view" /></IconButton>
          <IconButton $slim aria-label="Удалить"><Icon name="cross" /></IconButton>
          <DropButton aria-label="Варианты удаления"><Caret /></DropButton>
          <Sep $m={4} />
          <IconButton $slim aria-label="Отпустить"><Icon name="handOff" size={43} /></IconButton>
          <IconButton aria-label="Удержать" $on><Icon name="hand" size={43} /></IconButton>
          <Sep $m={4} />
          <ToolButton aria-label="Ещё"><Icon name="cut" /></ToolButton>
        </Tools>
      </BandBody>
    </Band>
    <TreePane>
      <TreeList>
        <TreeHead><MinusBox />Ответственный квартиросъемщик</TreeHead>
        {CLIENT_TREE.map(([icon, name, period]) => (
          <TreeRow key={icon + name}><Icon name={icon} size={43} /><Pink>{name}</Pink>{period && <Period>{period}</Period>}</TreeRow>
        ))}
      </TreeList>
      <VTrack><VUp aria-label="Вверх"><svg width="21" height="11" viewBox="0 0 21 11"><path d="M0 11h21l-10.500-11z" fill="#888" /></svg></VUp></VTrack>
    </TreePane>
  </Aside>
);

const GroupsDialog = () => (
  <Dialog role="dialog" aria-label="Группы клиентов">
    <DialogTitle>
      <Icon name="app" size={39} />
      <Caption as="h2" $color="#fff">Группы клиентов</Caption>
      <CapButton aria-label="Свернуть"><CapIcon kind="min" /></CapButton>
      <CapButton aria-label="Развернуть"><CapIcon kind="max" /></CapButton>
      <CapGap />
      <CapButton aria-label="Закрыть"><CapIcon kind="close" /></CapButton>
    </DialogTitle>
    <DialogTools>
      <CapGap />
      <Grip />
      <CapGap />
      <ToolButton><Icon name="sheet" />Создать</ToolButton>
      <DropButton $wide aria-label="Варианты создания"><Caret /></DropButton>
      <Sep $m={5} />
      <IconButton $slim aria-label="Изменить"><Icon name="edit" /></IconButton>
      <IconButton $slim aria-label="Удалить"><Icon name="cross" /></IconButton>
      <Sep $m={6} />
      <IconButton aria-label="Баланс"><Icon name="money" size={38} /></IconButton>
      <IconButton aria-label="Структура"><Icon name="levels" /></IconButton>
      <Sep $m={6} />
      <ToolButton><Icon name="refresh" />Обновить</ToolButton>
    </DialogTools>
    <DialogBody>
      <GroupTable>
        <colgroup><col /><col width="224" /></colgroup>
        <thead><tr><th>Наименование</th><th>Примечание</th></tr></thead>
        <tbody>
          {GROUPS.map(g => (
            <GroupRow key={g.name} $bg={g.bg} $sel={g.bg === S}>
              <td>
                <NodeCell>
                  {g.path.map((c, i) => <Gutter key={i} $bg={c} />)}
                  <Node $bg={g.bg} $leaf={!g.open}>{g.open && <MinusBox />}{g.name}</Node>
                </NodeCell>
              </td>
              <td>{g.note}</td>
            </GroupRow>
          ))}
        </tbody>
      </GroupTable>
    </DialogBody>
    <HScroll>
      <HButton aria-label="Влево"><svg width="11" height="20" viewBox="0 0 11 20"><path d="M11 0v20l-11-10z" /></svg></HButton>
      <HThumb />
      <HRest />
      <HButton aria-label="Вправо"><svg width="11" height="20" viewBox="0 0 11 20"><path d="M0 0v20l11-10z" /></svg></HButton>
    </HScroll>
    <Status>
      Записей: 10
      <svg width="34" height="34" viewBox="0 0 34 34" stroke="#8c8c88" strokeWidth="3" aria-hidden="true"><path d="M2 34l32-32M13 34l21-21M24 34l10-10" /></svg>
    </Status>
  </Dialog>
);

export default function App() {
  return (
    <Shell>
      <Global />
      <Defs />
      <TitleBar>
        <Icon name="app" size={39} />
        <Caption $color="#d6d3ca">Clients - PLATEX platex@demo [13874 / 13849] [Ответственный квартиросъемщик] [метраж, чел.]</Caption>
        <Flag width="43" height="31" viewBox="0 0 43 31" role="img" aria-label="RU"><path fill="#fbfbff" d="M0 0h43v10H0z" /><path fill="#3030f0" d="M0 9h43v11H0z" /><path fill="#e83010" d="M0 20h43v11H0z" /></Flag>
        <CapButton aria-label="Свернуть"><CapIcon kind="min" /></CapButton>
        <CapButton aria-label="Восстановить"><CapIcon kind="restore" /></CapButton>
        <CapGap />
        <CapButton aria-label="Закрыть"><CapIcon kind="close" /></CapButton>
      </TitleBar>
      <Menu>{MENU.map(([k, rest]) => <MenuItem key={k + rest}>{k && <u>{k}</u>}{rest}</MenuItem>)}</Menu>
      <Work>
        <LeftPane />
        <Splitter><SplitHandle aria-label="Скрыть панель"><span /></SplitHandle></Splitter>
        <Main>
          <TabBar>
            <Tab $active><Icon name="info" />Инфо</Tab>
            {TABS.map(([icon, name]) => <Tab key={name}><Icon name={icon} />{name}</Tab>)}
          </TabBar>
          <Page>
            <Title>Ответственный квартиросъемщик</Title>
            <Subtitle>Ответственный квартиросъемщик<Groups>Невский 1, 4 подъезд, Невский д1, Невский пр., учет жкх</Groups></Subtitle>
            <Bar><Fold open />Заметки</Bar>
            <Inset><Note>Нет заметок</Note></Inset>
            <Bar><Fold />Связанные клиенты</Bar>
            <Bar $before={36}><Fold />Реквизиты</Bar>
            <Bar><Fold open />Контакты</Bar>
            <Inset $top={9}>
              <SubBar><Strong>Контакты организации</Strong><a href="#edit">Редактировать</a></SubBar>
              <None>( нет )</None>
              <SubBar><Strong>Контактные лица</Strong><a href="#create">Создать</a></SubBar>
              <None>( нет )</None>
              <Addresses>
                <SubBar><Strong>Адрес регистрации (Юридический адрес)</Strong></SubBar>
                <SubBar><Strong>Адрес почтовый (Фактический адрес)</Strong></SubBar>
                <SubBar><Strong>Адрес доставки</Strong></SubBar>
                <Address><span>190000 ., Санкт-Петербург.</span><span>Невский пр., 1, 123</span></Address>
                <Address>( нет )</Address>
                <Address>( нет )</Address>
              </Addresses>
            </Inset>
            <Bar><Fold open />Договоры</Bar>
            <Inset>
              <Contract><strong>Договор "Ответственный квартиросъемщик"</strong> ( с 01.08.2018)</Contract>
              <Bar><Fold open />ЖКХ</Bar>
              <Block $top={19}>
                <Fold open />
                <Data $tone="yellow">
                  <Cols of={SERVICE_COLS} />
                  <tbody>
                    {SERVICES.map(([name, plan, date, sum, metered]) => (
                      <tr key={plan}>
                        <ServiceName $metered={metered}>{name}</ServiceName>
                        <td>{plan}</td><td>{date}</td><Num>1</Num><Num>{sum}</Num><Num>{sum}</Num><td>RUR</td><td />
                      </tr>
                    ))}
                  </tbody>
                </Data>
              </Block>
              <Block $top={19}>
                <Fold open />
                <Data $tone="green">
                  <Cols of={METER_COLS} />
                  <tbody>
                    <tr><td>ЖКХ</td><td>Количество проживающих</td><td>чел.</td><td>01.08.2018</td><Num>3</Num><td>Доступен</td><td /><td /></tr>
                    <tr><td>ЖКХ</td><td>Площадь помещения</td><td>метраж</td><td>01.08.2018</td><Num>33</Num><td>Доступен</td><td /><td /></tr>
                  </tbody>
                </Data>
              </Block>
            </Inset>
          </Page>
        </Main>
      </Work>
      <GroupsDialog />
    </Shell>
  );
}
